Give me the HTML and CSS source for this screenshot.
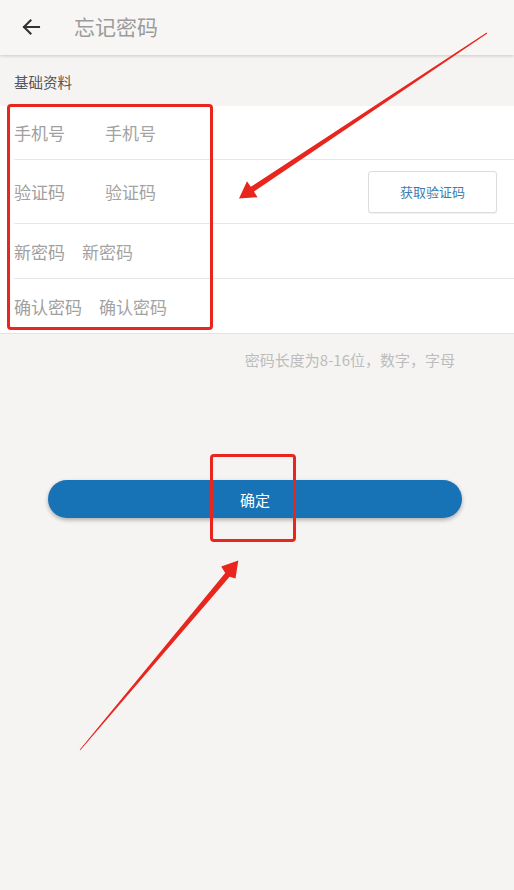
FILE: index.html
```html
<!DOCTYPE html>
<html lang="zh-CN">
<head>
<meta charset="utf-8">
<title>忘记密码</title>
<link rel="stylesheet" href="styles.css">
</head>
<body>
<div class="page">
  <header class="topbar">
    <svg class="back" width="20" height="18" viewBox="0 0 20 18" aria-hidden="true">
      <path d="M18 9H3M9.5 2.5L3 9l6.5 6.5" fill="none" stroke="#333" stroke-width="2.1" stroke-linecap="square"/>
    </svg>
    <h1 class="title">忘记密码</h1>
  </header>

  <div class="section-label">基础资料</div>

  <div class="card">
    <div class="row row-short">
      <span class="label label-wide">手机号</span>
      <span class="placeholder">手机号</span>
    </div>
    <div class="row row-tall">
      <span class="label label-wide">验证码</span>
      <span class="placeholder">验证码</span>
      <button class="code-btn">获取验证码</button>
    </div>
    <div class="row">
      <span class="label">新密码</span>
      <span class="placeholder">新密码</span>
    </div>
    <div class="row row-last">
      <span class="label">确认密码</span>
      <span class="placeholder">确认密码</span>
    </div>
  </div>

  <p class="hint">密码长度为8-16位，数字，字母</p>

  <div class="submit-wrap">
    <button class="submit">确定</button>
  </div>

  <div class="mark mark-form"></div>
  <div class="mark mark-btn"></div>

  <svg class="arrows" width="514" height="890" viewBox="0 0 514 890" aria-hidden="true">
    <polygon fill="#e8261d" points="487.3,33.4 253.9,191.6 257.6,197.2 239,198.5 247.0,181.2 250.8,186.8 486.7,32.6"/>
    <polygon fill="#e8261d" points="80.3,750.2 229.6,576.8 235.5,578.5 238.3,560.6 221.2,566.4 225.2,573.1 79.7,749.8"/>
  </svg>
</div>
</body>
</html>
```

FILE: styles.css
```css
* {
  box-sizing: border-box;
}

html, body {
  margin: 0;
  padding: 0;
}

body {
  background: #f5f4f2;
  font-family: "Noto Sans CJK SC", "Noto Sans", "Liberation Sans", sans-serif;
  width: 514px;
  height: 890px;
  overflow: hidden;
}

.page {
  position: relative;
  width: 514px;
  height: 890px;
}

.topbar {
  height: 55px;
  background: #f7f6f5;
  display: flex;
  align-items: center;
  padding-left: 21px;
  box-shadow: 0 1px 3px rgba(0, 0, 0, 0.18);
  position: relative;
  z-index: 1;
}

.back {
  display: block;
  margin-top: -2px;
}

.title {
  margin: -3px 0 0 33px;
  font-size: 21px;
  font-weight: normal;
  color: #9b9b9b;
  line-height: 1;
}

.section-label {
  height: 51px;
  display: flex;
  align-items: center;
  padding-left: 14px;
  font-size: 14.5px;
  color: #555;
  padding-top: 2px;
}

.card {
  background: #fff;
  border-bottom: 1px solid #e3e3e3;
}

.row {
  margin-left: 14px;
  height: 55px;
  display: flex;
  align-items: center;
  border-bottom: 1px solid #e6e6e6;
  padding-right: 17px;
  font-size: 17px;
  color: #a0a0a0;
}

.row-short {
  height: 54px;
}

.row-tall {
  height: 64px;
}

.row-last {
  border-bottom: none;
  height: 54px;
}

.label {
  margin-right: 17px;
}

.label-wide {
  width: 91px;
  margin-right: 0;
}

.placeholder {
  color: #a3a3a3;
}

.code-btn {
  margin-left: auto;
  width: 129px;
  height: 42px;
  background: #fff;
  border: 1px solid #dcdcdc;
  border-radius: 3px;
  font-family: inherit;
  font-size: 13px;
  color: #3b7db0;
  padding: 0;
  box-shadow: 0 1px 1px rgba(0, 0, 0, 0.06);
}

.hint {
  margin: 16px 0 0;
  padding-right: 59px;
  text-align: right;
  font-size: 15px;
  color: #bcbcbc;
  line-height: 20px;
}

.submit-wrap {
  padding: 0 52px 0 48px;
  margin-top: 110px;
}

.submit {
  display: block;
  width: 100%;
  height: 38px;
  border: none;
  border-radius: 19px;
  background: #1872b6;
  color: #fff;
  font-family: inherit;
  font-size: 15px;
  box-shadow: 0 2px 4px rgba(0, 0, 0, 0.3);
  padding: 0;
}

.mark {
  position: absolute;
  z-index: 2;
  border: 3px solid #e8261d;
  border-radius: 4px;
}

.mark-form {
  left: 7px;
  top: 104px;
  width: 206px;
  height: 226px;
}

.mark-btn {
  left: 210px;
  top: 454px;
  width: 86px;
  height: 88px;
}

.arrows {
  position: absolute;
  z-index: 2;
  left: 0;
  top: 0;
  pointer-events: none;
}
```
